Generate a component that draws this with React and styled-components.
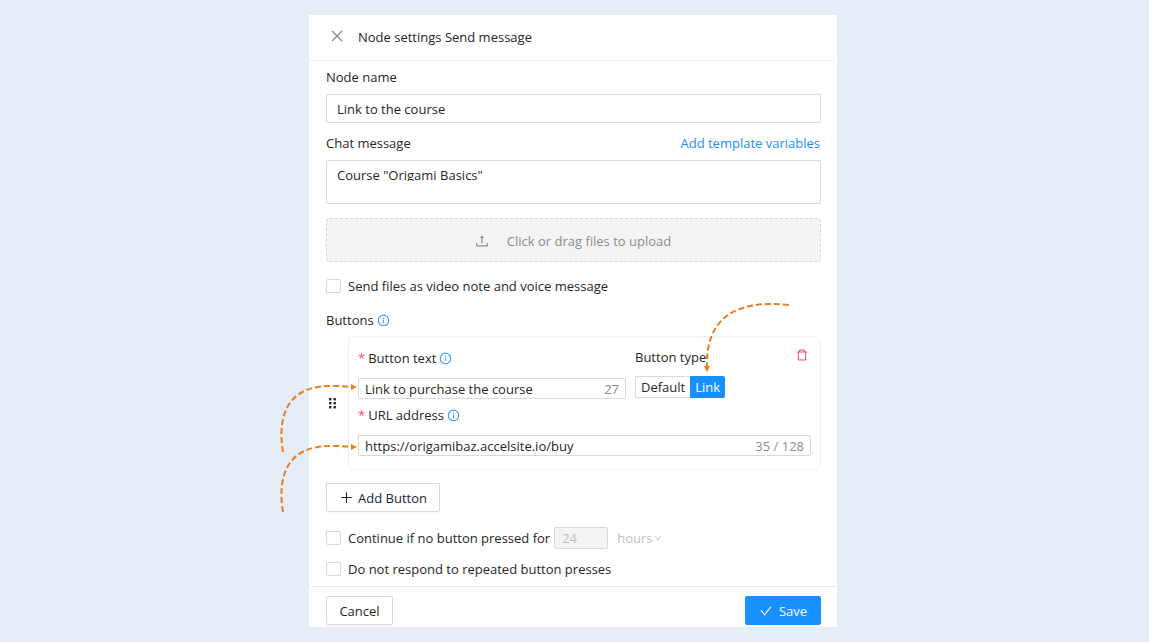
import React from "react";
import styled, { createGlobalStyle } from "styled-components";
import {
  AiOutlineCheck,
  AiOutlineClose,
  AiOutlineDelete,
  AiOutlineDown,
  AiOutlineInfoCircle,
  AiOutlinePlus,
  AiOutlineUpload,
} from "react-icons/ai";

const GlobalStyle = createGlobalStyle`
  * {
    box-sizing: border-box;
  }

  body {
    margin: 0;
    background: #e5edf6;
  }

  body, button, input, textarea, select {
    font-family: "Open Sans", "Noto Sans", sans-serif;
    font-size: 13px;
    line-height: 20px;
    color: #262626;
  }
`;

function Hint({ label }) {
  return (
    <HintButton type="button" aria-label={label}>
      <AiOutlineInfoCircle size={13} />
    </HintButton>
  );
}

function Check({ id, label }) {
  return (
    <CheckRow>
      <Checkbox type="checkbox" id={id} />
      <label htmlFor={id}>{label}</label>
    </CheckRow>
  );
}

function CounterInput({ id, defaultValue, counter, arrowTop }) {
  return (
    <CounterBox>
      <BareInput id={id} defaultValue={defaultValue} />
      <Counter>{counter}</Counter>
      <SideArrow $top={arrowTop} width="80" height="72" viewBox="0 0 80 72" aria-hidden="true">
        <path d="M4 70C-1 40 4 4 51 4C60 4 66 4 72 5" />
        <polygon points="72,2 78,5 72,8" />
      </SideArrow>
    </CounterBox>
  );
}

export default function App() {
  return (
    <Page>
      <GlobalStyle />
      <Panel>
        <Header>
          <CloseButton type="button" aria-label="Close">
            <AiOutlineClose size={16} />
          </CloseButton>
          <Title>Node settings Send message</Title>
        </Header>

        <Body>
          <Field>
            <label htmlFor="node-name">Node name</label>
            <TextInput id="node-name" defaultValue="Link to the course" />
          </Field>

          <Field>
            <LabelRow>
              <label htmlFor="chat-message">Chat message</label>
              <TemplateLink href="#variables">Add template variables</TemplateLink>
            </LabelRow>
            <MessageBox>
              <Message id="chat-message" defaultValue={'Course "Origami Basics"'} />
            </MessageBox>
          </Field>

          <Upload type="button">
            <AiOutlineUpload size={16} />
            Click or drag files to upload
          </Upload>

          <Check id="video-note" label="Send files as video note and voice message" />

          <SectionTitle>
            Buttons
            <Hint label="About buttons" />
          </SectionTitle>

          <ButtonItem>
            <DragHandle width="7" height="11" viewBox="0 0 7 11" aria-hidden="true">
              {[0, 4, 8].map((y) => (
                <React.Fragment key={y}>
                  <rect x="0" y={y} width="2.4" height="2.4" />
                  <rect x="4.5" y={y} width="2.4" height="2.4" />
                </React.Fragment>
              ))}
            </DragHandle>
            <Card>
              <CardRow>
                <CardField $width="268px">
                  <RequiredLabel>
                    <label htmlFor="button-text">Button text</label>
                    <Hint label="About button text" />
                  </RequiredLabel>
                  <CounterInput
                    id="button-text"
                    defaultValue="Link to purchase the course"
                    counter="27"
                    arrowTop={3}
                  />
                </CardField>
                <CardField>
                  <span id="button-type">Button type</span>
                  <Segmented role="group" aria-labelledby="button-type">
                    <Segment type="button">Default</Segment>
                    <Segment type="button" $active>
                      Link
                    </Segment>
                    <TopArrow width="88" height="76" viewBox="0 0 88 76" aria-hidden="true">
                      <path d="M86 5C30 -1 3 20 4 66" />
                      <polygon points="1,66 7,66 4,72" />
                    </TopArrow>
                  </Segmented>
                </CardField>
                <DeleteButton type="button" aria-label="Delete button">
                  <AiOutlineDelete size={14} />
                </DeleteButton>
              </CardRow>
              <CardField>
                <RequiredLabel>
                  <label htmlFor="button-url">URL address</label>
                  <Hint label="About URL address" />
                </RequiredLabel>
                <CounterInput
                  id="button-url"
                  defaultValue="https://origamibaz.accelsite.io/buy"
                  counter="35 / 128"
                  arrowTop={6}
                />
              </CardField>
            </Card>
          </ButtonItem>

          <AddButton type="button">
            <AiOutlinePlus size={15} />
            Add Button
          </AddButton>

          <TimeoutRow>
            <Check id="timeout" label="Continue if no button pressed for" />
            <HoursInput aria-label="Timeout" defaultValue="24" disabled />
            <UnitBox>
              <Unit aria-label="Unit" defaultValue="hours" disabled>
                <option value="hours">hours</option>
              </Unit>
              <AiOutlineDown size={10} />
            </UnitBox>
          </TimeoutRow>

          <Check id="no-repeat" label="Do not respond to repeated button presses" />
        </Body>

        <Footer>
          <Button type="button">Cancel</Button>
          <Button type="button" $primary>
            <AiOutlineCheck size={14} />
            Save
          </Button>
        </Footer>
      </Panel>
    </Page>
  );
}

const Page = styled.main`
  min-height: 100vh;
  padding: 15px 3px 15px 0;
`;

const Panel = styled.section`
  max-width: 528px;
  margin: 0 auto;
  background: #fff;
`;

const Header = styled.header`
  display: flex;
  align-items: center;
  gap: 13px;
  padding: 12px 20px 13px;
  border-bottom: 1px solid #f0f0f0;
`;

const Title = styled.h1`
  margin: 0;
  font-size: 13px;
  font-weight: 400;
`;

const IconButton = styled.button`
  display: flex;
  padding: 0;
  border: 0;
  background: none;
  cursor: pointer;
`;

const CloseButton = styled(IconButton)`
  margin-bottom: 2px;
  color: #8c8c8c;
`;

const HintButton = styled(IconButton)`
  color: #1890ff;
`;

const DeleteButton = styled(IconButton)`
  margin: 1px 2px 0 auto;
  color: #ff4d4f;
`;

const Body = styled.div`
  display: flex;
  flex-direction: column;
  padding: 6px 16px 7px 17px;
`;

const Field = styled.div`
  display: flex;
  flex-direction: column;
  gap: 7px;
  margin-bottom: 10px;
`;

const LabelRow = styled.div`
  display: flex;
  justify-content: space-between;
`;

const TemplateLink = styled.a`
  margin-right: 1px;
  color: #1890ff;
  text-decoration: none;
`;

const TextInput = styled.input`
  height: 29px;
  padding: 0 10px;
  border: 1px solid #d9d9d9;
  border-radius: 2px;
  background: #fff;
`;

const MessageBox = styled.div`
  display: flex;
  height: 44px;
  padding: 4px 10px;
  border: 1px solid #d9d9d9;
  border-radius: 2px;
`;

const Message = styled.textarea`
  flex: 1;
  height: 16px;
  padding: 0;
  border: 0;
  outline: 0;
  resize: none;
  overflow: hidden;
`;

const Upload = styled.button`
  display: flex;
  align-items: center;
  justify-content: center;
  gap: 17px;
  height: 44px;
  margin: 4px 0 14px;
  padding: 2px 2px 0 0;
  border: 1px dashed #d9d9d9;
  border-radius: 4px;
  background: #f4f4f4;
  color: #8c8c8c;
  cursor: pointer;
`;

const CheckRow = styled.div`
  display: flex;
  align-items: center;
  gap: 7px;
`;

const Checkbox = styled.input`
  appearance: none;
  width: 15px;
  height: 14px;
  margin: 0;
  border: 1px solid #d9d9d9;
  border-radius: 2px;
  background: #fff;

  &:checked {
    border-color: #1890ff;
    background: #1890ff;
  }
`;

const SectionTitle = styled.div`
  display: flex;
  align-items: center;
  gap: 3px;
  margin: 14px 0 6px;
`;

const ButtonItem = styled.div`
  display: flex;
  align-items: center;
  gap: 12px;
  padding-left: 3px;
`;

const DragHandle = styled.svg`
  flex: none;
  fill: #262626;
`;

const Card = styled.div`
  display: flex;
  flex: 1;
  flex-direction: column;
  gap: 5px;
  min-width: 0;
  padding: 10px 9px 13px;
  border: 1px solid #f0f0f0;
  border-radius: 6px;
`;

const CardRow = styled.div`
  display: flex;
  align-items: flex-start;
  gap: 9px;
`;

const CardField = styled.div`
  display: flex;
  flex-direction: column;
  gap: 9px;
  width: ${(props) => props.$width || "auto"};
`;

const RequiredLabel = styled.div`
  display: flex;
  align-items: center;
  gap: 3px;
  line-height: 22px;

  &::before {
    content: "*";
    color: #ff4d4f;
  }
`;

const CounterBox = styled.div`
  position: relative;
  display: flex;
  align-items: center;
  height: 21px;
  padding: 0 6px;
  border: 1px solid #d9d9d9;
  border-radius: 2px;
`;

const BareInput = styled.input`
  flex: 1;
  min-width: 0;
  height: 19px;
  padding: 0;
  border: 0;
  outline: 0;
  background: none;
`;

const Counter = styled.span`
  color: #8c8c8c;
`;

const Arrow = styled.svg`
  position: absolute;
  pointer-events: none;
  fill: #e67e22;

  path {
    fill: none;
    stroke: #e67e22;
    stroke-width: 2;
    stroke-dasharray: 6 3;
  }
`;

const SideArrow = styled(Arrow)`
  right: 100%;
  top: ${(props) => props.$top}px;
`;

const TopArrow = styled(Arrow)`
  left: 68px;
  bottom: 100%;
`;

const Segmented = styled.div`
  position: relative;
  display: flex;
  align-self: flex-start;
`;

const Segment = styled.button`
  height: 22px;
  padding: 0 ${(props) => (props.$active ? 4 : 5)}px;
  border: 1px solid ${(props) => (props.$active ? "#1890ff" : "#d9d9d9")};
  border-right-width: ${(props) => (props.$active ? 1 : 0)}px;
  border-radius: ${(props) => (props.$active ? "0 2px 2px 0" : "2px 0 0 2px")};
  background: ${(props) => (props.$active ? "#1890ff" : "#fff")};
  color: ${(props) => (props.$active ? "#fff" : "#262626")};
  cursor: pointer;
`;

const Button = styled.button`
  display: flex;
  align-items: center;
  justify-content: center;
  gap: 6px;
  min-width: ${(props) => (props.$primary ? 76 : 67)}px;
  height: 29px;
  padding: 0 12px;
  border: 1px solid ${(props) => (props.$primary ? "#1890ff" : "#d9d9d9")};
  border-radius: 2px;
  background: ${(props) => (props.$primary ? "#1890ff" : "#fff")};
  color: ${(props) => (props.$primary ? "#fff" : "#262626")};
  box-shadow: 0 2px 0 rgba(0, 0, 0, 0.02);
  cursor: pointer;
`;

const AddButton = styled(Button)`
  align-self: flex-start;
  gap: 4px;
  margin: 13px 0 15px;
`;

const TimeoutRow = styled.div`
  display: flex;
  align-items: center;
  margin-bottom: 10px;
`;

const HoursInput = styled.input`
  width: 54px;
  height: 22px;
  margin: 0 9px 0 4px;
  padding: 0 7px;
  border: 1px solid #d9d9d9;
  border-radius: 2px;
  background: #f4f4f4;
  color: #bfbfbf;
`;

const UnitBox = styled.div`
  display: flex;
  align-items: center;
  color: #bfbfbf;
`;

const Unit = styled.select`
  appearance: none;
  padding: 0;
  border: 0;
  background: none;
  color: #bfbfbf;
  opacity: 1;
`;

const Footer = styled.footer`
  display: flex;
  justify-content: space-between;
  padding: 9px 16px 2px 17px;
  border-top: 1px solid #e8e8e8;
`;
